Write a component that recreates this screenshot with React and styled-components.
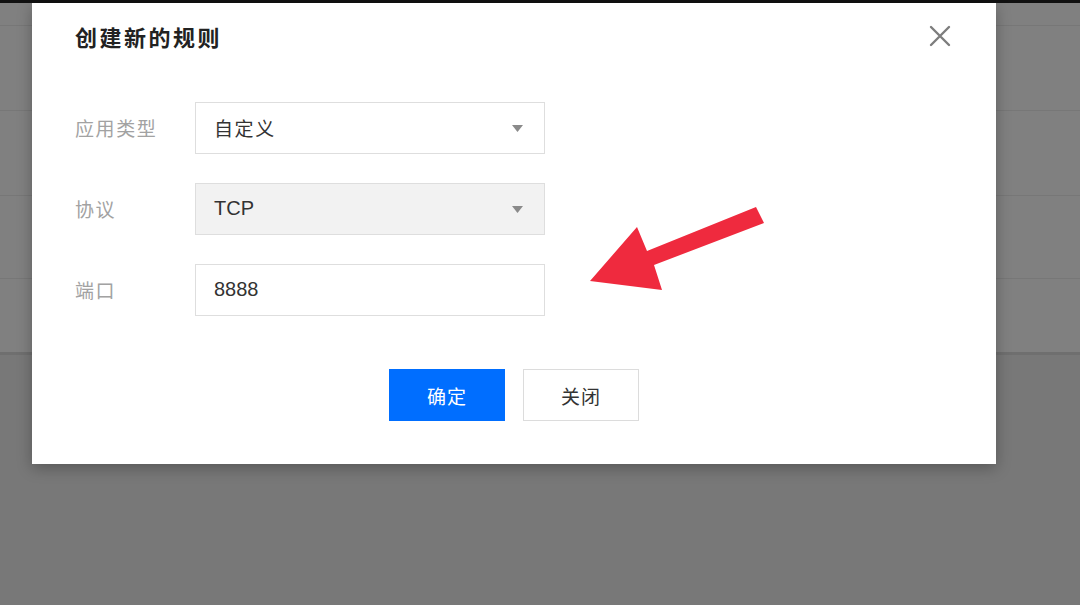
import styled, { createGlobalStyle } from "styled-components";

const GlobalStyle = createGlobalStyle`
  html, body {
    margin: 0;
    padding: 0;
    background: #787878;
  }
  * {
    box-sizing: border-box;
  }
`;

const bgRows = [22, 85, 85, 83, 74];

const fields = [
  { label: "应用类型", value: "自定义", select: true },
  { label: "协议", value: "TCP", select: true, disabled: true },
  { label: "端口", value: "8888", latin: true },
];

const Caret = () => (
  <svg width="11" height="7" viewBox="0 0 11 7">
    <path d="M0 0 L11 0 L5.5 7 Z" fill="#8a8a8a" />
  </svg>
);

const CloseIcon = () => (
  <svg width="22" height="22" viewBox="0 0 22 22">
    <path
      d="M2 2 L20 20 M20 2 L2 20"
      stroke="#7d7d7d"
      strokeWidth="2.4"
      strokeLinecap="round"
    />
  </svg>
);

const App = () => {
  return (
    <Screen>
      <GlobalStyle />
      <TopStrip />
      <Backdrop>
        {bgRows.map((h, i) => (
          <BgRow key={i} $h={h} $first={i === 0} />
        ))}
      </Backdrop>

      <Dialog>
        <Header>
          <Title>创建新的规则</Title>
          <CloseButton>
            <CloseIcon />
          </CloseButton>
        </Header>

        <Form>
          {fields.map((f) => (
            <FormRow key={f.label}>
              <Label>{f.label}</Label>
              <Field $disabled={f.disabled}>
                <FieldText $latin={f.latin || f.value === "TCP"}>
                  {f.value}
                </FieldText>
                {f.select && <Caret />}
              </Field>
            </FormRow>
          ))}
        </Form>

        <Footer>
          <Button $primary>确定</Button>
          <Button>关闭</Button>
        </Footer>
      </Dialog>

      <Arrow width="200" height="105" viewBox="0 0 200 105">
        <polygon
          points="10,86 57,32 67,56 176,12 184,28 74,70 82,95"
          fill="#ef2a3e"
        />
      </Arrow>
    </Screen>
  );
};

export default App;

const Screen = styled.div`
  position: relative;
  width: 1080px;
  height: 605px;
  overflow: hidden;
  background: #787878;
  font-family: "Noto Sans CJK SC", "Liberation Sans", sans-serif;
`;

const TopStrip = styled.div`
  height: 3px;
  background: #111;
`;

const Backdrop = styled.div`
  display: flex;
  flex-direction: column;
  background: #808080;
  border-bottom: 3px solid #6f6f6f;
`;

const BgRow = styled.div`
  height: ${(p) => p.$h}px;
  border-top: ${(p) => (p.$first ? "none" : "1px solid #777")};
`;

const Dialog = styled.div`
  position: absolute;
  left: 32px;
  top: 3px;
  width: 964px;
  height: 461px;
  background: #fff;
  box-shadow: 0 4px 14px rgba(0, 0, 0, 0.28);
  padding: 19px 45px 0 43px;
  display: flex;
  flex-direction: column;
`;

const Header = styled.div`
  display: flex;
  align-items: center;
  justify-content: space-between;
  height: 28px;
`;

const Title = styled.h2`
  margin: 0;
  font-size: 22px;
  font-weight: 700;
  letter-spacing: 2.5px;
  color: #222;
  line-height: 28px;
`;

const CloseButton = styled.div`
  display: flex;
  width: 22px;
  height: 22px;
`;

const Form = styled.div`
  display: flex;
  flex-direction: column;
  gap: 29px;
  margin-top: 52px;
`;

const FormRow = styled.div`
  display: flex;
  align-items: center;
`;

const Label = styled.div`
  width: 120px;
  font-size: 19px;
  letter-spacing: 1.6px;
  color: #a2a2a2;
  margin-top: -2px;
`;

const Field = styled.div`
  width: 350px;
  height: 52px;
  border: 1px solid #dedede;
  background: ${(p) => (p.$disabled ? "#f2f2f2" : "#fff")};
  display: flex;
  align-items: center;
  justify-content: space-between;
  padding: 0 21px 0 18px;
`;

const FieldText = styled.span`
  font-family: ${(p) =>
    p.$latin
      ? `"Liberation Sans", "Noto Sans CJK SC", sans-serif`
      : `"Noto Sans CJK SC", sans-serif`};
  font-size: ${(p) => (p.$latin ? "20px" : "19px")};
  letter-spacing: ${(p) => (p.$latin ? "0" : "1.6px")};
  color: #333;
  margin-top: -2px;
`;

const Footer = styled.div`
  display: flex;
  justify-content: center;
  gap: 18px;
  margin-top: 53px;
  padding-left: 2px;
`;

const Button = styled.div`
  width: 116px;
  height: 52px;
  display: flex;
  align-items: center;
  justify-content: center;
  font-size: 19px;
  letter-spacing: 1px;
  background: ${(p) => (p.$primary ? "#006eff" : "#fff")};
  color: ${(p) => (p.$primary ? "#fff" : "#333")};
  border: 1px solid ${(p) => (p.$primary ? "#006eff" : "#dcdcdc")};
`;

const Arrow = styled.svg`
  position: absolute;
  left: 580px;
  top: 195px;
`;
